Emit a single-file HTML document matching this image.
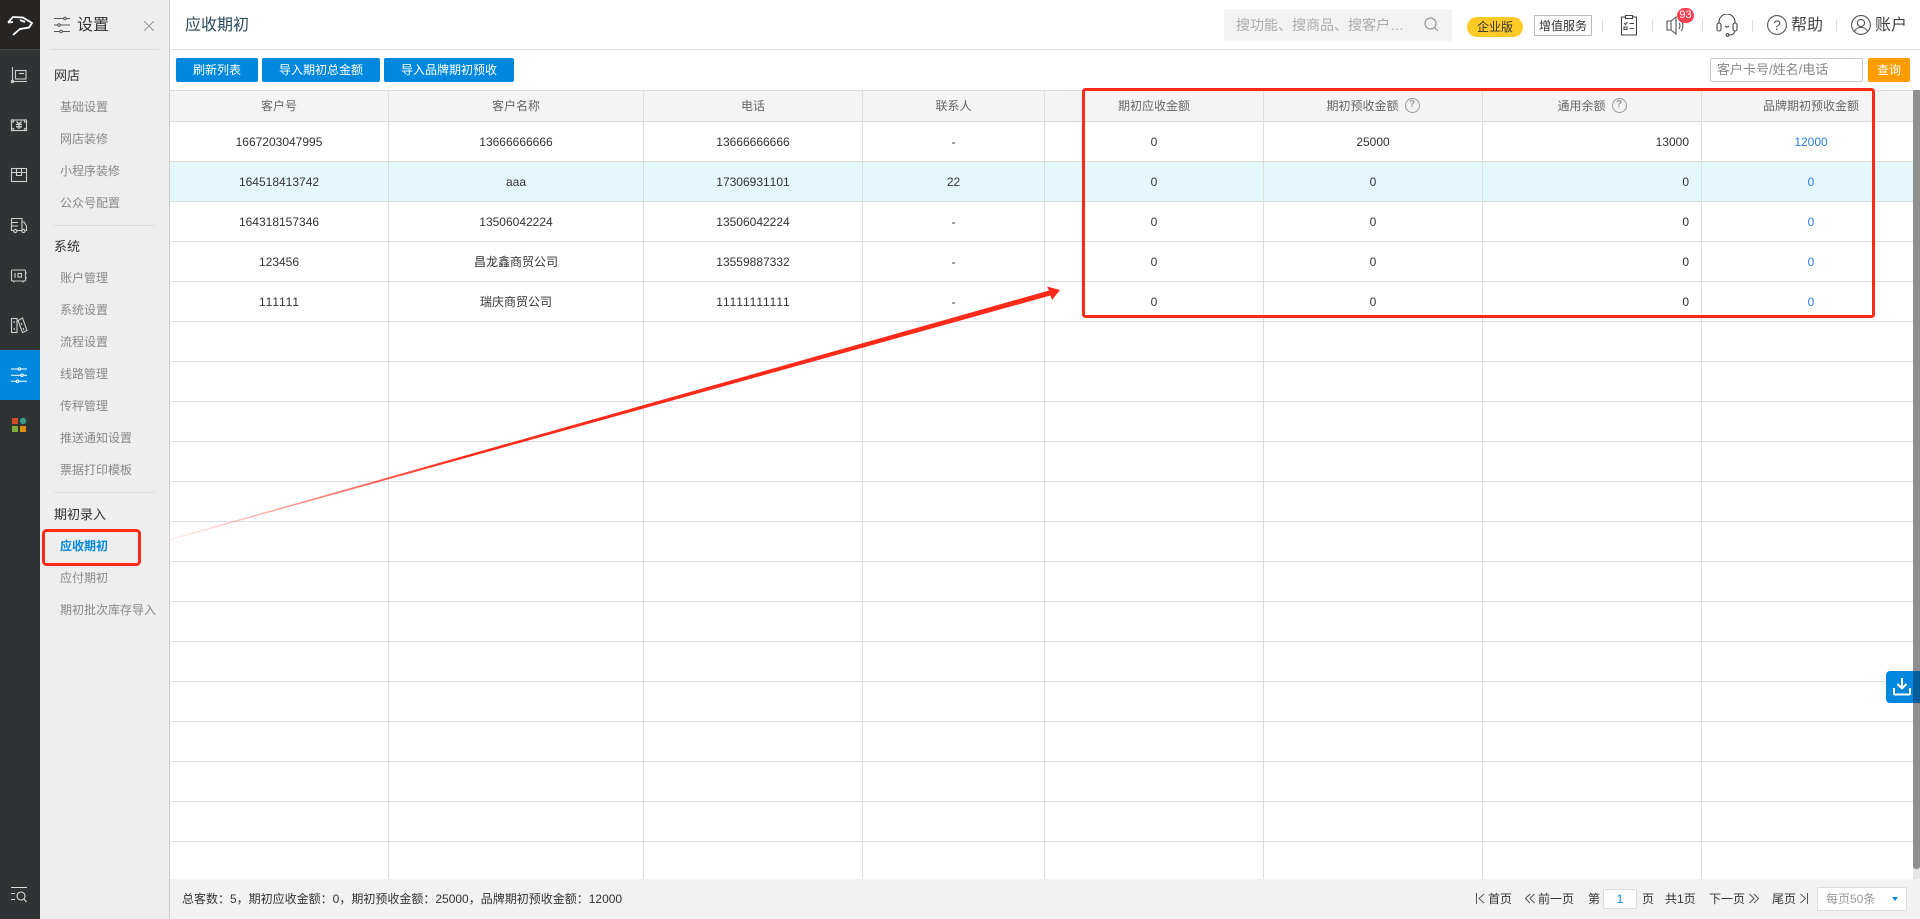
<!DOCTYPE html>
<html lang="zh">
<head>
<meta charset="utf-8">
<title>应收期初</title>
<style>
*{box-sizing:border-box;margin:0;padding:0}
html,body{width:1920px;height:919px;overflow:hidden;background:#fff}
body{font-family:"Liberation Sans","Noto Sans CJK SC",sans-serif;font-size:12px;color:#333;position:relative;font-kerning:none}
.a{position:absolute;white-space:nowrap}
.t{position:absolute;white-space:nowrap;height:20px;line-height:20px}
#rail{position:absolute;left:0;top:0;width:40px;height:919px;background:#2f3334}
#rail svg{position:absolute;left:0;top:0}
#nav{position:absolute;left:40px;top:0;width:130px;height:919px;background:#eee;border-right:1px solid #ccc}
.i{left:20px;color:#888}
.h{left:14px;font-size:13px;color:#333}
.d{position:absolute;left:14px;width:101px;height:1px;background:#ddd}
.btn{position:absolute;top:58px;height:24px;line-height:24px;background:#0088df;color:#fff;text-align:center;border-radius:2px}
#tb{position:absolute;left:170px;top:90px;width:1750px;height:789px;overflow:hidden}
table{border-collapse:separate;border-spacing:0;table-layout:fixed;width:1750px}
th{height:32px;background:#f4f4f4;font-weight:normal;color:#666;border-top:1px solid #ddd;border-right:1px solid #ddd;border-bottom:1px solid #ddd;text-align:center;line-height:16px;padding:0}
td{height:40px;border-right:1px solid #ddd;border-bottom:1px solid #ddd;text-align:center;line-height:16px;padding:0;color:#333}
tr.s td{background:#e3f7fd}
td.r{text-align:right;padding-right:12px}
td.b{color:#2a7fd8}
.q{display:inline-block;width:15px;height:15px;border:1.5px solid #999;border-radius:50%;color:#999;font-size:10px;line-height:12px;text-align:center;vertical-align:top;margin-left:6px;font-weight:bold}
.sep{position:absolute;top:20px;width:1px;height:12px;background:#ddd}
</style>
</head>
<body>
<div id="rail">
<svg width="40" height="919" fill="none" stroke="#d0d0d0" stroke-width="1.1">
<rect x="0" y="0" width="40" height="49" fill="#272624" stroke="none"/>
<rect x="0" y="49" width="40" height="1" fill="#444" stroke="none"/>
<path d="M8 22.5 L13 17 L23 17.5 L32 23 L29 27.5 L20 29 L13 35 M13 22 L8 22.5 M20 20 L25 22" stroke="#fff" stroke-width="1.8"/>
<path d="M12.5 67 V81.5 H27"/><circle cx="12.5" cy="81.5" r="1.2"/><rect x="15.5" y="70.5" width="10.5" height="8.5"/><path d="M19 73.5 H24"/>
<rect x="11.5" y="120" width="15" height="10.5"/><circle cx="12.5" cy="121" r="1.2"/><circle cx="25.5" cy="121" r="1.2"/><circle cx="12.5" cy="129.5" r="1.2"/><circle cx="25.5" cy="129.5" r="1.2"/><path d="M16.5 121.5 L19 124 L21.5 121.5 M16 124.5 H22 M16 126.8 H22 M19 124 V129" stroke-width="1.3"/>
<rect x="11.5" y="168.5" width="15" height="13"/><path d="M11.5 172.5 H26.5 M16.5 168.5 V175.5 H21.5 V168.5"/>
<path d="M14 230.5 H11.5 V218.5 H22 V230.5 H17 M22 222 H24 L26.5 226 V230.5 H25.5 M20.5 230.5 H22 M11.5 222.5 H18 M11.5 226 H18"/><circle cx="15.3" cy="231" r="1.6"/><circle cx="23.4" cy="231" r="1.6"/>
<rect x="11.5" y="270" width="14" height="11" rx="1"/><rect x="18" y="273.5" width="3.5" height="3.5"/><path d="M15 273 V278 M26 273 H27 M26 278 H27 M14 281 V282.5 M23 281 V282.5"/>
<rect x="11.5" y="318.5" width="5.5" height="14"/><path d="M14.2 321 V323 M14.2 328 V330"/><path d="M18 320.5 L22.5 318 L27 330.5 L22.5 332.5 Z M21 323 L22 325 M23 328 L24 330"/>
<rect x="0" y="350" width="40" height="50" fill="#0088df" stroke="none"/>
<path d="M11 369 H27 M11 375.3 H27 M11 381.3 H27" stroke="#fff" stroke-width="1"/>
<circle cx="19.5" cy="369" r="1.2" fill="#0088df" stroke="#fff"/><circle cx="22" cy="375.3" r="1.2" fill="#0088df" stroke="#fff"/><circle cx="17.5" cy="381.3" r="1.2" fill="#0088df" stroke="#fff"/>
<rect x="12" y="418" width="6" height="6" fill="#d04a26" stroke="none"/><circle cx="23" cy="421" r="3.2" fill="#3a9a8c" stroke="none"/><rect x="12" y="426" width="6" height="6" fill="#7faf3a" stroke="none"/><rect x="20" y="426" width="6" height="6" fill="#e0900f" stroke="none"/>
<path d="M11 887.5 H27 M11 893.5 H15 M11 899.5 H15" stroke="#e0e0e0"/><circle cx="21" cy="896" r="4" stroke="#e0e0e0"/><path d="M24 899 L26.5 902" stroke="#e0e0e0"/>
</svg>
</div>
<div id="nav">
<svg class="a" style="left:14px;top:16px" width="17" height="18" fill="none" stroke="#555" stroke-width="1"><path d="M0 2.5 H16 M0 9 H16 M0 15.5 H16"/><circle cx="11" cy="2.5" r="1.3" fill="#eee"/><circle cx="5" cy="9" r="1.3" fill="#eee"/><circle cx="7" cy="15.5" r="1.3" fill="#eee"/></svg>
<div class="t" style="left:37px;top:16px;font-size:16px;color:#333">设置</div>
<svg class="a" style="left:104px;top:21px" width="10" height="10" stroke="#999" stroke-width="1"><path d="M0 0 L10 10 M10 0 L0 10"/></svg>
<div class="d" style="left:10px;width:109px;top:49px"></div>
<div class="t h" style="top:66px">网店</div>
<div class="t i" style="top:97px">基础设置</div>
<div class="t i" style="top:129px">网店装修</div>
<div class="t i" style="top:161px">小程序装修</div>
<div class="t i" style="top:193px">公众号配置</div>
<div class="d" style="top:225px"></div>
<div class="t h" style="top:237px">系统</div>
<div class="t i" style="top:268px">账户管理</div>
<div class="t i" style="top:300px">系统设置</div>
<div class="t i" style="top:332px">流程设置</div>
<div class="t i" style="top:364px">线路管理</div>
<div class="t i" style="top:396px">传秤管理</div>
<div class="t i" style="top:428px">推送通知设置</div>
<div class="t i" style="top:460px">票据打印模板</div>
<div class="d" style="top:492px"></div>
<div class="t h" style="top:505px">期初录入</div>
<div class="t i" style="top:536px;color:#0088df;font-weight:bold">应收期初</div>
<div class="t i" style="top:568px">应付期初</div>
<div class="t i" style="top:600px">期初批次库存导入</div>
</div>

<div class="t" style="left:185px;top:16px;font-size:16px;color:#2c4a5e">应收期初</div>
<div class="a" style="left:170px;top:49px;width:1750px;height:1px;background:#ddd"></div>

<div class="a" style="left:1224px;top:9px;width:228px;height:32px;background:#f3f3f3;border-radius:2px"></div>
<div class="t" style="left:1236px;top:15px;font-size:14px;color:#aaa">搜功能、搜商品、搜客户…</div>
<svg class="a" style="left:1424px;top:17px" width="15" height="16" fill="none" stroke="#999" stroke-width="1.2"><circle cx="6.5" cy="6.5" r="5.5"/><path d="M10.5 10.5 L14 14"/></svg>
<div class="a" style="left:1467px;top:17px;width:56px;height:20px;line-height:20px;background:#ffc926;border-radius:10px;text-align:center;color:#333">企业版</div>
<div class="a" style="left:1534px;top:15px;width:58px;height:21px;line-height:20px;border:1px solid #bbb;text-align:center;color:#333">增值服务</div>
<div class="sep" style="left:1602px"></div><div class="sep" style="left:1652px"></div><div class="sep" style="left:1702px"></div><div class="sep" style="left:1752px"></div><div class="sep" style="left:1836px"></div>
<svg class="a" style="left:1620px;top:14px" width="18" height="22" fill="none" stroke="#444" stroke-width="1.1"><path d="M5 3 H1.5 V21 H16.5 V3 H13"/><path d="M5.5 4.5 V1.5 H12.5 V4.5 Z"/><path d="M4 9 L5.5 10.5 L7.5 8 M9.5 9.5 H14 M4 13 H7 V15.5 H4 Z M9.5 14.5 H14"/></svg>
<svg class="a" style="left:1666px;top:14px" width="22" height="22" fill="none" stroke="#555" stroke-width="1.1"><path d="M1 7 H5 V16 H1 Z M5 7 L10 3 V20 L5 16"/><path d="M13 9 Q15 11.5 13 15 M16 8 Q18 12 15.5 17"/></svg>
<div class="a" style="left:1677px;top:8px;width:17px;height:15px;line-height:15px;background:#f5414f;border-radius:8px;color:#fff;font-size:11px;text-align:center">93</div>
<svg class="a" style="left:1716px;top:14px" width="22" height="24" fill="none" stroke="#444" stroke-width="1.1"><path d="M3 9 V8 A8 8 0 0 1 19 8 V9"/><rect x="1" y="9" width="4" height="8" rx="2"/><rect x="17" y="9" width="4" height="8" rx="2"/><path d="M19 17 Q18 21 13 21"/><circle cx="11.5" cy="21" r="1.3"/><path d="M9 12 Q11 14 13 12"/></svg>
<svg class="a" style="left:1767px;top:15px" width="20" height="20" fill="none" stroke="#555" stroke-width="1.1"><circle cx="10" cy="10" r="9.4"/></svg>
<div class="t" style="left:1767px;top:15px;width:20px;text-align:center;font-size:14px;color:#555">?</div>
<div class="t" style="left:1791px;top:16px;font-size:16px;color:#444">帮助</div>
<svg class="a" style="left:1851px;top:15px" width="20" height="20" fill="none" stroke="#555" stroke-width="1.1"><circle cx="10" cy="10" r="9.4"/><circle cx="10" cy="8" r="3.6"/><path d="M3.5 16.5 Q5 12.5 10 12.5 Q15 12.5 16.5 16.5"/></svg>
<div class="t" style="left:1875px;top:16px;font-size:16px;color:#444">账户</div>

<div class="btn" style="left:176px;width:82px">刷新列表</div>
<div class="btn" style="left:262px;width:118px">导入期初总金额</div>
<div class="btn" style="left:384px;width:130px">导入品牌期初预收</div>
<div class="a" style="left:1710px;top:58px;width:153px;height:24px;line-height:22px;border:1px solid #ccc;border-radius:2px;padding-left:6px;font-size:13px;color:#888">客户卡号/姓名/电话</div>
<div class="a" style="left:1868px;top:58px;width:42px;height:24px;line-height:24px;background:#ff9c00;color:#fff;text-align:center;border-radius:2px">查询</div>

<div id="tb">
<table>
<colgroup><col style="width:219px"><col style="width:255px"><col style="width:219px"><col style="width:182px"><col style="width:219px"><col style="width:219px"><col style="width:219px"><col style="width:218px"></colgroup>
<thead><tr><th>客户号</th><th>客户名称</th><th>电话</th><th>联系人</th><th>期初应收金额</th><th>期初预收金额<span class="q">?</span></th><th>通用余额<span class="q">?</span></th><th style="border-right:0">品牌期初预收金额</th></tr></thead>
<tbody>
<tr><td>1667203047995</td><td>13666666666</td><td>13666666666</td><td>-</td><td>0</td><td>25000</td><td class="r">13000</td><td class="b" style="border-right:0">12000</td></tr>
<tr class="s"><td>164518413742</td><td>aaa</td><td>17306931101</td><td>22</td><td>0</td><td>0</td><td class="r">0</td><td class="b" style="border-right:0">0</td></tr>
<tr><td>164318157346</td><td>13506042224</td><td>13506042224</td><td>-</td><td>0</td><td>0</td><td class="r">0</td><td class="b" style="border-right:0">0</td></tr>
<tr><td>123456</td><td>昌龙鑫商贸公司</td><td>13559887332</td><td>-</td><td>0</td><td>0</td><td class="r">0</td><td class="b" style="border-right:0">0</td></tr>
<tr><td>111111</td><td>瑞庆商贸公司</td><td>11111111111</td><td>-</td><td>0</td><td>0</td><td class="r">0</td><td class="b" style="border-right:0">0</td></tr>
<tr><td></td><td></td><td></td><td></td><td></td><td></td><td></td><td style="border-right:0"></td></tr>
<tr><td></td><td></td><td></td><td></td><td></td><td></td><td></td><td style="border-right:0"></td></tr>
<tr><td></td><td></td><td></td><td></td><td></td><td></td><td></td><td style="border-right:0"></td></tr>
<tr><td></td><td></td><td></td><td></td><td></td><td></td><td></td><td style="border-right:0"></td></tr>
<tr><td></td><td></td><td></td><td></td><td></td><td></td><td></td><td style="border-right:0"></td></tr>
<tr><td></td><td></td><td></td><td></td><td></td><td></td><td></td><td style="border-right:0"></td></tr>
<tr><td></td><td></td><td></td><td></td><td></td><td></td><td></td><td style="border-right:0"></td></tr>
<tr><td></td><td></td><td></td><td></td><td></td><td></td><td></td><td style="border-right:0"></td></tr>
<tr><td></td><td></td><td></td><td></td><td></td><td></td><td></td><td style="border-right:0"></td></tr>
<tr><td></td><td></td><td></td><td></td><td></td><td></td><td></td><td style="border-right:0"></td></tr>
<tr><td></td><td></td><td></td><td></td><td></td><td></td><td></td><td style="border-right:0"></td></tr>
<tr><td></td><td></td><td></td><td></td><td></td><td></td><td></td><td style="border-right:0"></td></tr>
<tr><td></td><td></td><td></td><td></td><td></td><td></td><td></td><td style="border-right:0"></td></tr>
<tr><td></td><td></td><td></td><td></td><td></td><td></td><td></td><td style="border-right:0"></td></tr>
</tbody>
</table>
</div>

<div class="a" style="left:1913px;top:90px;width:7px;height:789px;background:#e6e6e6"></div>
<div class="a" style="left:1913px;top:90px;width:7px;height:779px;background:#8f8f8f;border-radius:0 0 3px 3px"></div>

<div class="a" style="left:1886px;top:671px;width:34px;height:32px;background:#0088df;border-radius:4px 0 0 4px"></div>
<div class="a" style="left:1913px;top:671px;width:7px;height:32px;background:#005d99"></div>
<svg class="a" style="left:1893px;top:677px" width="18" height="19" fill="none" stroke="#fff" stroke-width="2"><path d="M9 1 V11 M4.5 7 L9 11.5 L13.5 7 M1 11 V16.5 Q1 17.5 2 17.5 H16 Q17 17.5 17 16.5 V11"/></svg>

<div class="a" style="left:170px;top:879px;width:1750px;height:40px;background:#f2f2f2"></div>
<div class="t" style="left:182px;top:889px;color:#333">总客数：5，期初应收金额：0，期初预收金额：25000，品牌期初预收金额：12000</div>
<svg class="a" style="left:1476px;top:893px" width="9" height="11" fill="none" stroke="#555"><path d="M.5 0 V11 M8 1 L3 5.5 L8 10"/></svg>
<div class="t" style="left:1488px;top:889px">首页</div>
<svg class="a" style="left:1525px;top:893px" width="10" height="11" fill="none" stroke="#555"><path d="M5 1 L.5 5.5 L5 10 M9.5 1 L5 5.5 L9.5 10"/></svg>
<div class="t" style="left:1538px;top:889px">前一页</div>
<div class="t" style="left:1588px;top:889px">第</div>
<div class="a" style="left:1603px;top:889px;width:34px;height:20px;line-height:18px;border:1px solid #ddd;border-radius:2px;background:#fff;text-align:center;color:#0088df">1</div>
<div class="t" style="left:1642px;top:889px">页</div>
<div class="t" style="left:1665px;top:889px">共1页</div>
<div class="t" style="left:1709px;top:889px">下一页</div>
<svg class="a" style="left:1749px;top:893px" width="10" height="11" fill="none" stroke="#555"><path d="M.5 1 L5 5.5 L.5 10 M5 1 L9.5 5.5 L5 10"/></svg>
<div class="t" style="left:1772px;top:889px">尾页</div>
<svg class="a" style="left:1800px;top:893px" width="8" height="11" fill="none" stroke="#555"><path d="M7.5 0 V11 M.5 1 L5.5 5.5 L.5 10"/></svg>
<div class="a" style="left:1817px;top:887px;width:90px;height:24px;line-height:22px;border:1px solid #ddd;border-radius:2px;background:#fff;padding-left:8px;color:#999">每页50条</div>
<div class="a" style="left:1892px;top:897px;width:0;height:0;border-left:3px solid transparent;border-right:3px solid transparent;border-top:4px solid #0088df"></div>

<svg class="a" style="left:0;top:0;pointer-events:none" width="1920" height="919">
<defs><linearGradient id="g" gradientUnits="userSpaceOnUse" x1="165" y1="541" x2="460" y2="458"><stop offset="0" stop-color="#ff2a1a" stop-opacity=".1"/><stop offset="1" stop-color="#ff2a1a"/></linearGradient></defs>
<polygon points="170,539 1049,290.5 1047,286.5 1060,290 1052,300 1050.5,295.5 170,540" fill="url(#g)"/>
<rect x="1083.5" y="89.5" width="790" height="227" rx="2" fill="none" stroke="#ff2a1a" stroke-width="3"/>
<rect x="43.5" y="530.5" width="96" height="34" rx="3" fill="none" stroke="#ff2a1a" stroke-width="3"/>
</svg>
</body>
</html>
